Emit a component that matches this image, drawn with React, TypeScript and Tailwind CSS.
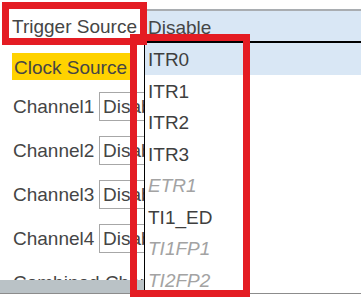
const options = [
  { label: "ITR0", active: true },
  { label: "ITR1" },
  { label: "ITR2" },
  { label: "ITR3" },
  { label: "ETR1", disabled: true },
  { label: "TI1_ED" },
  { label: "TI1FP1", disabled: true },
  { label: "TI2FP2", disabled: true },
];

const channels = ["Channel1", "Channel2", "Channel3", "Channel4"];

export default function App() {
  return (
    <div className="relative w-[361px] h-[298px] overflow-hidden bg-white font-['Liberation_Sans',Arial,sans-serif] text-[19px] leading-none text-[#454545]">
      {/* selected row */}
      <div className="flex mt-[9px] h-[33px]">
        <div className="w-[147px] pl-3 pt-[2px] flex items-center whitespace-nowrap">Trigger Source</div>
        <div className="flex-1 flex items-center pl-px pt-[2px] bg-[#d9e7f5] border-t-2 border-[#a9adb1]">Disable</div>
      </div>

      <div className="flex h-[252px] border-b border-[#8c8c8c]">
        {/* parameter panel */}
        <div className="w-[144px] flex flex-col">
          <div className="flex-1 overflow-hidden">
            <div className="mt-[11px] ml-3 w-[118px] h-[27px] pl-[2px] pt-[2px] flex items-center whitespace-nowrap overflow-hidden bg-[#ffd200]">Clock Source</div>
            <div className="mt-[4px]">
              {channels.map((c) => (
                <div key={c} className="h-[44px] flex items-center pl-[13px] whitespace-nowrap overflow-hidden">
                  <span className="w-[86px] shrink-0">{c}</span>
                  <div className="shrink-0 w-[45px] h-[29px] border border-r-0 border-[#a7a7a7] flex items-center pl-[3px] overflow-hidden">Disable</div>
                </div>
              ))}
              <div className="h-[44px] flex items-center pl-[13px] whitespace-nowrap overflow-hidden">Combined Channels</div>
            </div>
          </div>
          <div className="h-[13px] bg-[#bac2c6]" />
        </div>

        {/* dropdown list */}
        <div className="flex-1 border-l border-t-2 border-black -mt-px">
          {options.map((o) => (
            <div
              key={o.label}
              className={`h-[31.5px] flex items-center pl-[3px] pt-[2px] ${o.active ? "bg-[#d9e7f5]" : ""} ${o.disabled ? "italic text-[#a3a3a3]" : "text-[#3f3f3f]"}`}
            >
              {o.label}
            </div>
          ))}
        </div>
      </div>

      {/* annotation boxes */}
      <div className="absolute left-[2px] top-[2px] w-[145px] h-[43px] border-[7px] border-[#e41c23]" />
      <div className="absolute left-[130px] top-[34px] w-[120px] h-[263px] border-[7px] border-[#e41c23]" />
    </div>
  );
}
